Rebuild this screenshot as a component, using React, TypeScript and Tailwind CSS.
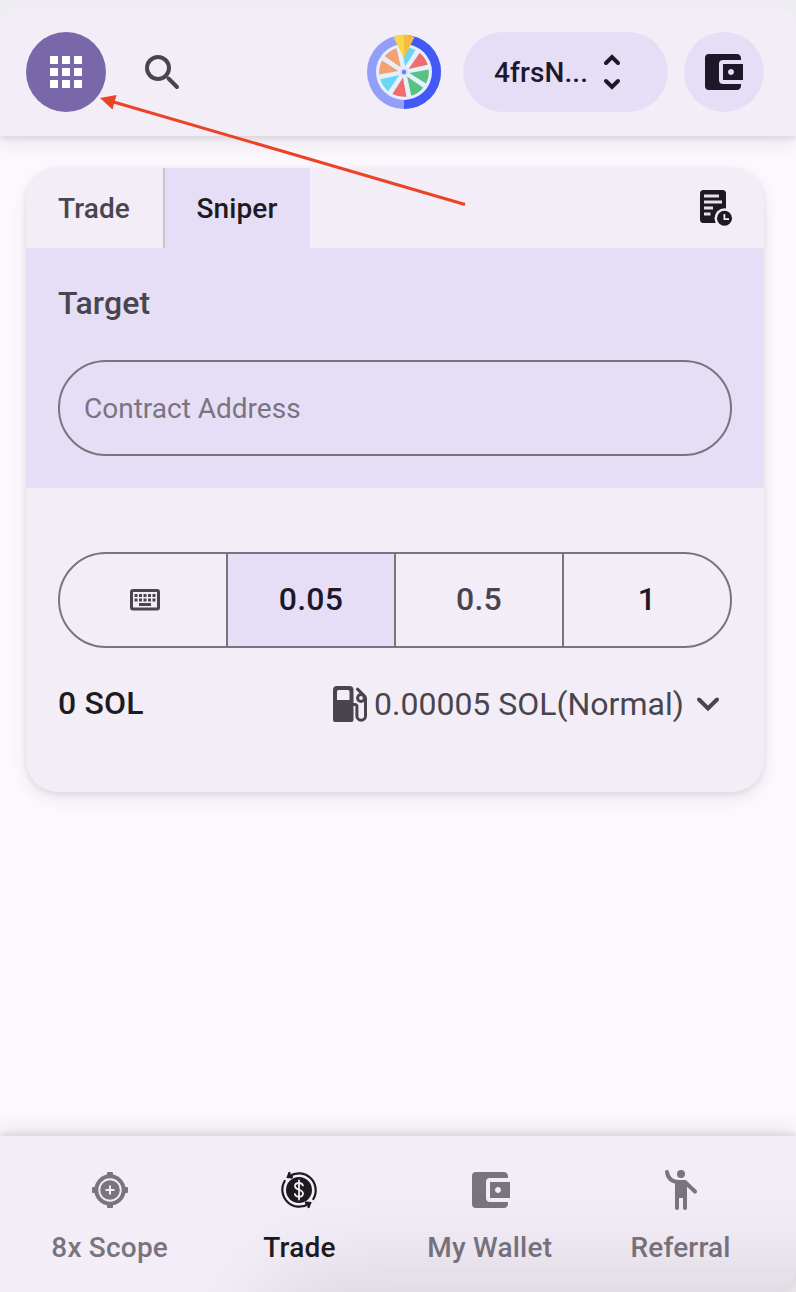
import React, { useState } from 'react';
import { MdApps, MdAccountBalanceWallet } from 'react-icons/md';

const SearchIcon = () => (
  <svg className="w-12 h-12" viewBox="0 0 48 48" fill="none" stroke="#49454f" strokeWidth={4} strokeLinecap="round">
    <circle cx={20} cy={20} r={11} />
    <path d="M30.5 30.5l8.5 8.5" />
  </svg>
);

const wheelColors = ['#6bd5f5', '#ee6e6e', '#58c282', '#58c282', '#ee6e6e', '#6bd5f5', '#f3a173', '#f3a173'];

const WheelIcon = () => (
  <svg className="w-20 h-20" viewBox="0 0 80 80">
    <circle cx={40} cy={40} r={37} fill="#929ff8" />
    <path d="M40 3a37 37 0 0 1 0 74z" fill="#4259f5" />
    <circle cx={40} cy={40} r={28} fill="#e6f0fd" />
    {wheelColors.map((color, i) => (
      <path key={i} d="M40 34.5L32.8 16.2A25 25 0 0 1 47.2 16.2z" fill={color} transform={`rotate(${11 + i * 45} 40 40)`} />
    ))}
    <circle cx={40} cy={40} r={4} fill="#d6e2fb" />
    <circle cx={40} cy={40} r={2.2} fill="#6c7bf4" />
    <path d="M29.5 5Q35 2.5 40 2.5V26.5z" fill="#f8d648" />
    <path d="M50.5 5Q45 2.5 40 2.5V26.5z" fill="#f4bd42" />
  </svg>
);

const UnfoldIcon = () => (
  <svg className="w-12 h-12" viewBox="0 0 48 48" fill="none" stroke="#1d192b" strokeWidth={4} strokeLinecap="round">
    <path d="M18 15l6-6 6 6M18 33l6 6 6-6" />
  </svg>
);

const HistoryIcon = () => (
  <svg className="w-9 h-9" viewBox="0 0 36 36">
    <rect x={2} y={0} width={26} height={33} rx={3.5} fill="#1d1b20" />
    <g fill="#e6e1ee">
      <rect x={6} y={4.5} width={15} height={3} />
      <rect x={6} y={10.5} width={18} height={3} />
      <rect x={6} y={16.5} width={9} height={3} />
      <rect x={6} y={22.5} width={6.5} height={3} />
    </g>
    <circle cx={26.5} cy={28.3} r={10} fill="#f3edf7" />
    <circle cx={26.5} cy={28.3} r={7.5} fill="#1d1b20" />
    <path d="M26.4 24v5.2h4.6" fill="none" stroke="#f3edf7" strokeWidth={1.8} />
  </svg>
);

const KeyboardIcon = () => (
  <svg className="w-[30px] h-[22px]" viewBox="0 0 30 22">
    <rect x={1.5} y={1.5} width={27} height={18.5} rx={1.5} fill="none" stroke="#49454f" strokeWidth={3} />
    <g fill="#49454f">
      {[4.5, 9, 13.5, 18, 22.5].map((x) => (
        <React.Fragment key={x}>
          <rect x={x} y={5} width={3} height={3} />
          <rect x={x} y={9.5} width={3} height={3} />
        </React.Fragment>
      ))}
      <rect x={9} y={14} width={12} height={3} />
    </g>
  </svg>
);

const FuelIcon = () => (
  <svg className="w-9 h-[38px]" viewBox="0 0 36 38" fill="none" stroke="#49454f">
    <path
      d="M1 35V5q0-4 4-4h12.5q4 0 4 4v30q0 2-2 2H3q-2 0-2-2zM5 6.5V15h12.5V6.5q0-1.5-1.5-1.5H6.5Q5 5 5 6.5z"
      fill="#49454f"
      fillRule="evenodd"
      stroke="none"
    />
    <circle cx={29} cy={13} r={3.4} strokeWidth={3} />
    <path d="M25.5 4.2l7 6.800q1 1 1 2.500V31a4.300 4.300 0 0 1-8.600 0V21.500q0-2-2-2H21" strokeWidth={3} strokeLinecap="round" />
  </svg>
);

const ScopeIcon = () => (
  <svg className="w-12 h-12" viewBox="0 0 48 48" fill="none" stroke="#79747e">
    <g fill="#79747e" stroke="none">
      <rect x={21} y={6} width={6} height={6} rx={1} />
      <rect x={21} y={36} width={6} height={6} rx={1} />
      <rect x={6} y={21} width={6} height={6} rx={1} />
      <rect x={36} y={21} width={6} height={6} rx={1} />
      <circle cx={24} cy={24} r={9.8} />
    </g>
    <circle cx={24} cy={24} r={13.7} strokeWidth={4} />
    <path d="M24 19.5v9M19.5 24h9" stroke="#f3edf7" strokeWidth={2} />
  </svg>
);

const TradeIcon = () => (
  <svg className="w-12 h-12" viewBox="0 0 48 48" fill="none" stroke="#1d1b20" strokeWidth={2.2} strokeLinecap="round">
    <circle cx={24} cy={24} r={13} fill="#1d1b20" stroke="none" />
    <path d="M14.5 10A17 17 0 0 1 38.3 33M33.5 38A17 17 0 0 1 9.7 15" />
    <path d="M14.5 7l-1.5 4 4 .2M33.5 41l1.5-4-4-.2" strokeWidth={2.4} />
    <path
      d="M28 19.5q-1-2.5-4-2.5-4 0-4 3.300c0 4.200 8 2.700 8 7 0 2.200-1.500 3.500-4 3.500q-3.300 0-4.200-2.800M24 14.500v19"
      stroke="#f3edf7"
      strokeWidth={1.8}
    />
  </svg>
);

const ReferralIcon = () => (
  <svg className="w-12 h-12" viewBox="0 0 48 48" fill="none" stroke="#79747e" strokeWidth={4} strokeLinecap="round">
    <circle cx={24} cy={8} r={4} fill="#79747e" stroke="none" />
    <path d="M10 6q1.5 10 12 10h6l10 9.5M20 18v24M28 18v24" />
    <path d="M18 15h12v17H18z" fill="#79747e" stroke="none" />
  </svg>
);

const amounts = ['0.05', '0.5', '1'];

const navItems = [
  { label: '8x Scope', icon: <ScopeIcon />, className: 'pl-px text-[#79747e]' },
  { label: 'Trade', icon: <TradeIcon />, className: 'text-[#1d1b20]' },
  { label: 'My Wallet', icon: <MdAccountBalanceWallet className="w-12 h-12" />, className: 'text-[#79747e]' },
  { label: 'Referral', icon: <ReferralIcon />, className: 'pl-px text-[#79747e]' },
];

export default function App() {
  const [amount, setAmount] = useState('0.05');
  const [address, setAddress] = useState('');

  return (
    <div className="relative w-[796px] h-[1292px] flex flex-col overflow-hidden bg-[#fdf8fe] font-['Roboto',sans-serif] font-medium text-[#1d1b20]">
      {/* Header */}
      <div className="shrink-0 bg-[#eeeef2] pt-2 shadow-[0_2px_6px_rgba(0,0,0,0.1),0_6px_20px_2px_rgba(0,0,0,0.08)]">
        <header className="h-32 flex items-center rounded-t-[20px] bg-[#f3edf7] pl-[26px] pr-8">
          <button className="w-20 h-20 rounded-full bg-[#7868aa] text-white flex items-center justify-center">
            <MdApps className="w-12 h-12" />
          </button>
          <button className="ml-8">
            <SearchIcon />
          </button>
          <button className="ml-auto">
            <WheelIcon />
          </button>
          <button className="ml-[19px] w-[205px] h-20 rounded-full bg-[#e6def6] pl-[31px] flex items-center text-[28px] text-[#1d192b]">
            <span className="w-[94px] pt-0.5 text-left tracking-[0.1px]">4frsN...</span>
            <UnfoldIcon />
          </button>
          <button className="ml-4 w-20 h-20 rounded-full bg-[#e6def6] pr-0.5 text-[#1d192b] flex items-center justify-center">
            <MdAccountBalanceWallet className="w-12 h-12" />
          </button>
        </header>
      </div>

      {/* Sniper card */}
      <main className="mt-8 ml-[26px] w-[738px] h-[624px] shrink-0 rounded-[32px] overflow-hidden bg-[#f3edf7] shadow-[0_2px_6px_rgba(0,0,0,0.08),0_6px_18px_rgba(0,0,0,0.08)]">
        <div className="h-20 flex items-center text-[28px] tracking-[0.1px]">
          <button className="h-20 w-[139px] pl-8 pt-0.5 text-left text-[#49454f] border-r-2 border-[#cac4d0]">Trade</button>
          <button className="h-20 w-[145px] pt-0.5 pr-px bg-[#e6def6]">Sniper</button>
          <button className="ml-auto mr-[30px]">
            <HistoryIcon />
          </button>
        </div>

        <div className="h-60 bg-[#e6def6] px-8 pt-8">
          <h2 className="text-[32px] leading-[46px] tracking-[0.1px] text-[#49454f]">Target</h2>
          <input
            value={address}
            onChange={(e) => setAddress(e.target.value)}
            placeholder="Contract Address"
            className="mt-[34px] w-[674px] h-24 rounded-full border-2 border-[#79747e] px-6 text-[28px] font-normal placeholder:text-[#79747e]"
          />
        </div>

        <div className="px-8 pt-16">
          <div className="w-[674px] h-24 flex rounded-full border-2 border-[#79747e] overflow-hidden text-[32px] tracking-[0.2px]">
            <button className="w-[166px] shrink-0 pl-1 flex items-center justify-center">
              <KeyboardIcon />
            </button>
            {amounts.map((value) => (
              <button
                key={value}
                onClick={() => setAmount(value)}
                className={`w-[168px] shrink-0 pb-[3px] border-l-2 border-[#79747e] ${
                  amount === value
                    ? 'bg-[#e6def6] text-[#1d192b]'
                    : value === '0.5'
                    ? 'text-[#49454f]'
                    : 'text-[#1d1b20]'
                }`}
              >
                {value}
              </button>
            ))}
          </div>

          <div className="mt-8 h-12 flex items-center text-[32px]">
            <span className="pb-0.5 tracking-[0.2px]">0 SOL</span>
            <button className="ml-auto flex items-center font-normal text-[#49454f]">
              <FuelIcon />
              <span className="ml-[6px] w-[310px] text-left whitespace-nowrap">0.00005 SOL(Normal)</span>
              <svg className="w-12 h-12" viewBox="0 0 48 48" fill="none" stroke="currentColor" strokeWidth={4} strokeLinecap="round">
                <path d="M15 19.5l9 9 9-9" />
              </svg>
            </button>
          </div>
        </div>
      </main>

      {/* Bottom navigation */}
      <nav className="mt-auto shrink-0 rounded-br-[20px] bg-[#f3edf7] h-[156px] flex pl-[14px] pt-[30px] shadow-[0_-2px_6px_rgba(0,0,0,0.1),0_-6px_20px_2px_rgba(0,0,0,0.08)]">
        {navItems.map(({ label, icon, className }) => (
          <button key={label} className={`w-[190.3px] flex flex-col items-center ${className}`}>
            {icon}
            <span className="mt-[14px] text-[28px] leading-10 tracking-[0.2px]">{label}</span>
          </button>
        ))}
      </nav>

      {/* Soft shade in the bottom right corner */}
      <div className="absolute left-[282px] top-[1292px] w-[700px] h-[200px] rounded-[40px] shadow-[0_0_100px_12px_rgba(0,0,0,0.12)] pointer-events-none" />

      {/* Callout arrow */}
      <svg className="absolute top-0 left-0 w-[480px] h-[220px] pointer-events-none" viewBox="0 0 480 220">
        <path d="M112 101.5L465 204.5" stroke="#ec4226" strokeWidth={3} />
        <path d="M100 98l16.5-3-4 14.5z" fill="#ec4226" />
      </svg>
    </div>
  );
}
